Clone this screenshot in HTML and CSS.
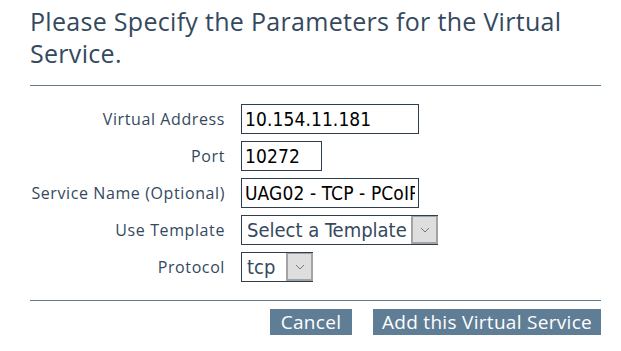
FILE: index.html
```html
<!DOCTYPE html>
<html lang="en">
<head>
    <meta charset="UTF-8">
    <title>Virtual Service</title>
    <link rel="stylesheet" href="styles.css">
</head>
<body>
    <div class="panel">
        <h2 class="title">Please Specify the Parameters for the Virtual Service.</h2>
        <div class="rule"></div>

        <form class="params">
            <label class="label" for="vaddr">Virtual Address</label>
            <input class="field w-addr" id="vaddr" type="text" value="10.154.11.181">

            <label class="label" for="port">Port</label>
            <input class="field w-port" id="port" type="text" value="10272">

            <label class="label" for="sname">Service Name (Optional)</label>
            <input class="field w-addr" id="sname" type="text" value="UAG02 - TCP - PCoIP">

            <label class="label" for="tmpl">Use Template</label>
            <span class="pick w-tmpl">
                <select class="picker" id="tmpl">
                    <option>Select a Template</option>
                </select>
                <span class="arrow"><svg width="10" height="6" viewBox="0 0 10 6"><path d="M1 1 L5 5 L9 1" fill="none" stroke="#777" stroke-width="1"/></svg></span>
            </span>

            <label class="label" for="proto">Protocol</label>
            <span class="pick w-proto">
                <select class="picker" id="proto">
                    <option>tcp</option>
                    <option>udp</option>
                </select>
                <span class="arrow"><svg width="10" height="6" viewBox="0 0 10 6"><path d="M1 1 L5 5 L9 1" fill="none" stroke="#777" stroke-width="1"/></svg></span>
            </span>
        </form>

        <div class="rule bottom"></div>

        <div class="actions">
            <button class="btn cancel" type="button">Cancel</button>
            <button class="btn add" type="button">Add this Virtual Service</button>
        </div>
    </div>
</body>
</html>
```

FILE: styles.css
```css
body {
    margin: 0;
    background: #fff;
    font-family: "Open Sans", "Noto Sans", sans-serif;
    color: #34495e;
}
.panel {
    width: 571px;
    padding: 5px 0 0 30px;
}
.title {
    margin: 0;
    font-size: 25px;
    font-weight: normal;
    letter-spacing: 0.3px;
    line-height: 32px;
    color: #34495e;
}
.rule {
    height: 1px;
    background: #5f7a8c;
    margin-top: 16px;
}
.rule.bottom {
    margin-top: 18px;
}
.params {
    display: grid;
    grid-template-columns: 195px auto;
    column-gap: 16px;
    row-gap: 7px;
    margin: 18px 0 0 0;
    justify-items: start;
    align-items: center;
}
.label {
    justify-self: end;
    font-size: 16px;
    letter-spacing: 0.6px;
    color: #34495e;
}
.field {
    box-sizing: border-box;
    height: 30px;
    margin: 0;
    padding: 0 3px;
    border: 1px solid #2c3e50;
    font-family: "DejaVu Sans Condensed", "DejaVu Sans", sans-serif;
    font-size: 19px;
    letter-spacing: 0.1px;
    color: #000;
    background: #fff;
}
.w-addr { width: 178px; }
.w-port { width: 81px; }
.pick {
    position: relative;
    display: block;
    box-sizing: border-box;
    height: 30px;
    border: 1px solid #2c3e50;
    background: #fff;
}
.w-tmpl { width: 197px; }
.w-proto { width: 72px; }
.picker {
    appearance: none;
    -webkit-appearance: none;
    width: 100%;
    height: 28px;
    margin: 0;
    padding: 0 0 0 5px;
    border: none;
    background: transparent;
    font-family: "DejaVu Sans Condensed", "DejaVu Sans", sans-serif;
    font-size: 20px;
    color: #34495e;
}
/* fake dropdown button drawn over the select's right end */
.arrow {
    position: absolute;
    top: 0;
    right: -1px;
    bottom: 0;
    width: 27px;
    box-sizing: border-box;
    border: 2px solid #a3a3a3;
    border-top-width: 1px;
    background: #dedede;
    display: flex;
    justify-content: center;
    align-items: center;
    pointer-events: none;
}
.actions {
    display: flex;
    justify-content: flex-end;
    gap: 21px;
    margin-top: 8px;
}
.btn {
    height: 26px;
    border: none;
    padding: 0;
    background: #5f7d95;
    color: #fff;
    font-family: "Open Sans", "Noto Sans", sans-serif;
    font-size: 19px;
    letter-spacing: 0.3px;
    line-height: 26px;
}
.btn.cancel { width: 82px; }
.btn.add { width: 228px; }
```
